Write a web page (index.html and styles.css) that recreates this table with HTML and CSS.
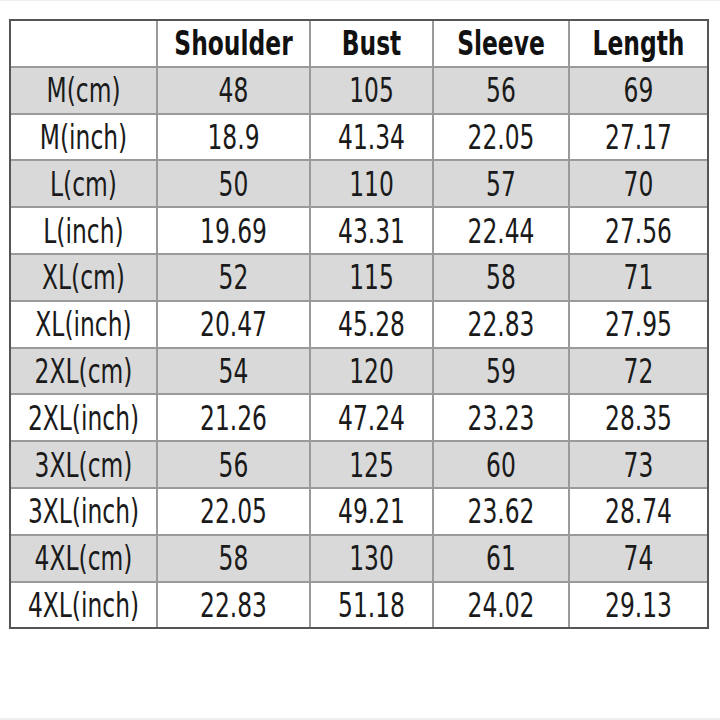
FILE: index.html
```html
<!DOCTYPE html>
<html>
<head>
<meta charset="utf-8">
<link rel="stylesheet" href="styles.css">
</head>
<body>
<div class="page">
<table class="sizes">
<colgroup><col class="c1"><col class="c2"><col class="c3"><col class="c4"><col class="c5"></colgroup>
<thead>
<tr><th></th><th><span>Shoulder</span></th><th><span>Bust</span></th><th><span>Sleeve</span></th><th><span>Length</span></th></tr>
</thead>
<tbody>
<tr class="g"><td><span>M(cm)</span></td><td><span>48</span></td><td><span>105</span></td><td><span>56</span></td><td><span>69</span></td></tr>
<tr><td><span>M(inch)</span></td><td><span>18.9</span></td><td><span>41.34</span></td><td><span>22.05</span></td><td><span>27.17</span></td></tr>
<tr class="g"><td><span>L(cm)</span></td><td><span>50</span></td><td><span>110</span></td><td><span>57</span></td><td><span>70</span></td></tr>
<tr><td><span>L(inch)</span></td><td><span>19.69</span></td><td><span>43.31</span></td><td><span>22.44</span></td><td><span>27.56</span></td></tr>
<tr class="g"><td><span>XL(cm)</span></td><td><span>52</span></td><td><span>115</span></td><td><span>58</span></td><td><span>71</span></td></tr>
<tr><td><span>XL(inch)</span></td><td><span>20.47</span></td><td><span>45.28</span></td><td><span>22.83</span></td><td><span>27.95</span></td></tr>
<tr class="g"><td><span>2XL(cm)</span></td><td><span>54</span></td><td><span>120</span></td><td><span>59</span></td><td><span>72</span></td></tr>
<tr><td><span>2XL(inch)</span></td><td><span>21.26</span></td><td><span>47.24</span></td><td><span>23.23</span></td><td><span>28.35</span></td></tr>
<tr class="g"><td><span>3XL(cm)</span></td><td><span>56</span></td><td><span>125</span></td><td><span>60</span></td><td><span>73</span></td></tr>
<tr><td><span>3XL(inch)</span></td><td><span>22.05</span></td><td><span>49.21</span></td><td><span>23.62</span></td><td><span>28.74</span></td></tr>
<tr class="g"><td><span>4XL(cm)</span></td><td><span>58</span></td><td><span>130</span></td><td><span>61</span></td><td><span>74</span></td></tr>
<tr><td><span>4XL(inch)</span></td><td><span>22.83</span></td><td><span>51.18</span></td><td><span>24.02</span></td><td><span>29.13</span></td></tr>
</tbody>
</table>
</div>
</body>
</html>
```
FILE: styles.css
```css
html, body {
  margin: 0;
  padding: 0;
  background: #fff;
}
.page {
  box-sizing: border-box;
  width: 720px;
  height: 720px;
  padding: 18px 0 0 9px;
  border-top: 1px solid #efefef;
  border-bottom: 2px solid #eeeeee;
  font-family: "DejaVu Sans Condensed", "DejaVu Sans", sans-serif;
  color: #1a1a1a;
}
.sizes {
  border-collapse: separate;
  border-spacing: 0;
  border: 2px solid #555;
  table-layout: fixed;
  width: 700px;
}
.c1 { width: 147px; }
.c2 { width: 153px; }
.c3 { width: 123px; }
.c4 { width: 136px; }
.c5 { width: 137px; }
.sizes th, .sizes td {
  height: 44.8px;
  padding: 0;
  text-align: center;
  vertical-align: middle;
  border-right: 2px solid #9a9a9a;
  border-bottom: 2px solid #9a9a9a;
  font-size: 26px;
  line-height: 26px;
  font-weight: normal;
  overflow: hidden;
}
.sizes th:last-child, .sizes td:last-child {
  border-right: none;
}
.sizes tbody tr:last-child td {
  border-bottom: none;
}
.sizes th {
  font-weight: bold;
  color: #111;
}
.sizes span {
  display: inline-block;
  transform: scaleY(1.3);
}
.sizes tr.g td {
  background: #d9d9d9;
}
```
